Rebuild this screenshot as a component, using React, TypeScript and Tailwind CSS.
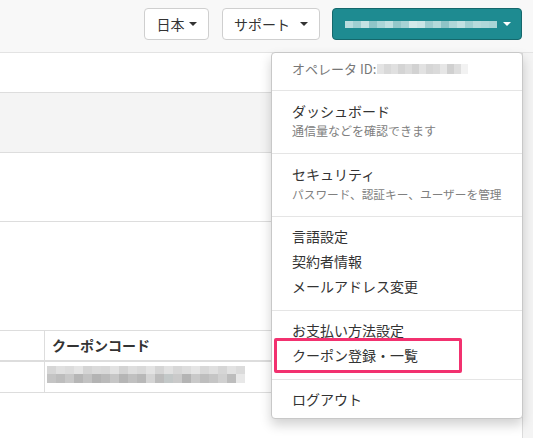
import React from 'react';

const ID_BLUR = [
  'bg-[#e4e4e4]', 'bg-[#d9d9d9]', 'bg-[#e0e0e0]', 'bg-[#d4d4d4]', 'bg-[#dcdcdc]',
  'bg-[#d2d2d2]', 'bg-[#e2e2e2]', 'bg-[#d6d6d6]', 'bg-[#dadada]', 'bg-[#e6e6e6]',
  'bg-[#d0d0d0]', 'bg-[#dedede]', 'bg-[#f2f2f2]',
];

const TEAL_BLUR = [
  'bg-[#b9dcde]', 'bg-[#9fcfd1]', 'bg-[#c4e2e3]', 'bg-[#8fc5c8]', 'bg-[#aad5d7]',
  'bg-[#bfe0e1]', 'bg-[#93c8ca]', 'bg-[#a6d3d5]', 'bg-[#d2e9ea]', 'bg-[#c9e5e6]',
  'bg-[#9ccdd0]', 'bg-[#b3dadb]', 'bg-[#8ec4c7]', 'bg-[#aed7d9]', 'bg-[#c1e1e2]',
  'bg-[#a0d0d2]', 'bg-[#b7dbdc]', 'bg-[#b0d8da]', 'bg-[#a9d5d6]',
];

const CODE_TOP = [
  'bg-[#d6d6d6]', 'bg-[#e0e0e0]', 'bg-[#dcdcdc]', 'bg-[#e4e4e4]', 'bg-[#d4d4d4]',
  'bg-[#dadada]', 'bg-[#d8d8d8]', 'bg-[#e2e2e2]', 'bg-[#d3d3d3]', 'bg-[#dedede]',
  'bg-[#d9d9d9]', 'bg-[#e3e3e3]', 'bg-[#d5d5d5]', 'bg-[#e1e1e1]', 'bg-[#d7d7d7]',
  'bg-[#dddddd]', 'bg-[#e5e5e5]', 'bg-[#d8d8d8]', 'bg-[#dfdfdf]', 'bg-[#d6d6d6]',
  'bg-[#e2e2e2]', 'bg-[#dbdbdb]',
];

const CODE_BOTTOM = [
  'bg-[#c4c4c4]', 'bg-[#bdbdbd]', 'bg-[#c8c8c8]', 'bg-[#b6b6b6]', 'bg-[#c2c2c2]',
  'bg-[#b3b3b3]', 'bg-[#bababa]', 'bg-[#c6c6c6]', 'bg-[#b5b5b5]', 'bg-[#c0c0c0]',
  'bg-[#b8b8b8]', 'bg-[#d4d4d4]', 'bg-[#bcbcbc]', 'bg-[#c3c8c8]', 'bg-[#cacaca]',
  'bg-[#b4b4b4]', 'bg-[#c9c9c9]', 'bg-[#bebebe]', 'bg-[#c5c5c5]', 'bg-[#d0d0d0]',
  'bg-[#bdbdbd]', 'bg-[#e8e8e8]',
];

function Caret({ className = 'border-t-[#333]' }: { className?: string }) {
  return (
    <span
      className={`inline-block w-0 h-0 border-t-[4px] border-x-[4px] border-x-transparent ${className}`}
    />
  );
}

function Divider() {
  return <div className="h-px bg-[#e5e5e5]" />;
}

function Item({ label }: { label: string }) {
  return <div className="h-[25px] leading-[25px] pl-5 text-[14px] text-[#333]">{label}</div>;
}

function Dropdown() {
  return (
    <div className="absolute left-[271px] top-[52px] w-[252px] h-[367px] bg-white border border-[#c8c8c8] rounded-[4px] shadow-[0_6px_12px_rgba(0,0,0,0.18)]">
      <div className="h-[37px] pt-[6px] pl-5 flex items-start">
        <span className="text-[13px] leading-[20px] text-[#777]">オペレータ ID:</span>
        <div className="flex mt-[5px] ml-[1px]">
          {ID_BLUR.map((c, i) => (
            <span key={i} className={`w-[7px] h-[10px] ${c}`} />
          ))}
        </div>
      </div>
      <Divider />
      <div className="h-[62px] pt-[10px] pl-5">
        <div className="text-[14px] leading-[20px] text-[#333]">ダッシュボード</div>
        <div className="text-[12px] leading-[20px] text-[#808080]">通信量などを確認できます</div>
      </div>
      <Divider />
      <div className="h-[62px] pt-[10px] pl-5">
        <div className="text-[14px] leading-[20px] text-[#333]">セキュリティ</div>
        <div className="text-[11.7px] leading-[20px] text-[#808080]">パスワード、認証キー、ユーザーを管理</div>
      </div>
      <Divider />
      <div className="h-[93px] pt-[7px]">
        <Item label="言語設定" />
        <Item label="契約者情報" />
        <Item label="メールアドレス変更" />
      </div>
      <Divider />
      <div className="relative h-[68px] pt-[7px]">
        <Item label="お支払い方法設定" />
        <Item label="クーポン登録・一覧" />
        <div className="absolute left-[2px] top-[27px] w-[188px] h-[35px] border-[3px] border-[#f2316f] rounded-[2px]" />
      </div>
      <Divider />
      <div className="pt-[7px]">
        <Item label="ログアウト" />
      </div>
    </div>
  );
}

export default function App() {
  return (
    <div className="relative w-[533px] h-[438px] overflow-hidden bg-white font-['Noto_Sans_CJK_JP','Liberation_Sans',sans-serif]">
      <header className="h-[53px] bg-[#f8f8f8] border-b border-[#e3e3e3] flex justify-end pt-2 pr-[11px]">
        <button className="w-[65px] h-8 bg-white border border-[#cfcfcf] rounded-[4px] flex items-center justify-center gap-[4px] text-[14px] text-[#333]">
          <span>日本</span>
          <Caret />
        </button>
        <button className="ml-[13px] w-[98px] h-8 bg-white border border-[#cfcfcf] rounded-[4px] flex items-center justify-center gap-[10px] text-[14px] text-[#333]">
          <span>サポート</span>
          <Caret />
        </button>
        <button className="ml-[12px] w-[190px] h-8 bg-[#1e8b91] border border-[#15686c] rounded-[4px] flex items-center pl-[12px] gap-[6px]">
          <div className="flex">
            {TEAL_BLUR.map((c, i) => (
              <span key={i} className={`w-[8px] h-[7px] ${c}`} />
            ))}
          </div>
          <Caret className="border-t-white" />
        </button>
      </header>

      <div className="flex h-[385px]">
        <main className="w-[523px] border-r border-[#dcdcdc] flex flex-col">
          <div className="h-[40px] border-b border-[#dddddd]" />
          <div className="h-[60px] bg-[#f4f4f4] border-b border-[#dddddd]" />
          <div className="h-[69px] border-b border-[#dddddd]" />
          <div className="h-[109px] border-b border-[#dddddd]" />
          <div className="h-[31px] border-b-2 border-[#dddddd] flex">
            <div className="w-[45px] border-r border-[#dddddd]" />
            <div className="pl-[7px] text-[14px] leading-[29px] font-bold text-[#333]">クーポンコード</div>
          </div>
          <div className="h-[31px] border-b border-[#dddddd] flex">
            <div className="w-[45px] border-r border-[#dddddd]" />
            <div className="pl-[2px] pt-[4px] flex flex-col">
              <div className="flex">
                {CODE_TOP.map((c, i) => (
                  <span key={i} className={`w-[9px] h-[8px] ${c}`} />
                ))}
              </div>
              <div className="flex">
                {CODE_BOTTOM.map((c, i) => (
                  <span key={i} className={`w-[9px] h-[9px] ${c}`} />
                ))}
              </div>
            </div>
          </div>
        </main>
        <div className="flex-1 bg-[#f4f4f4]" />
      </div>

      <Dropdown />
    </div>
  );
}
